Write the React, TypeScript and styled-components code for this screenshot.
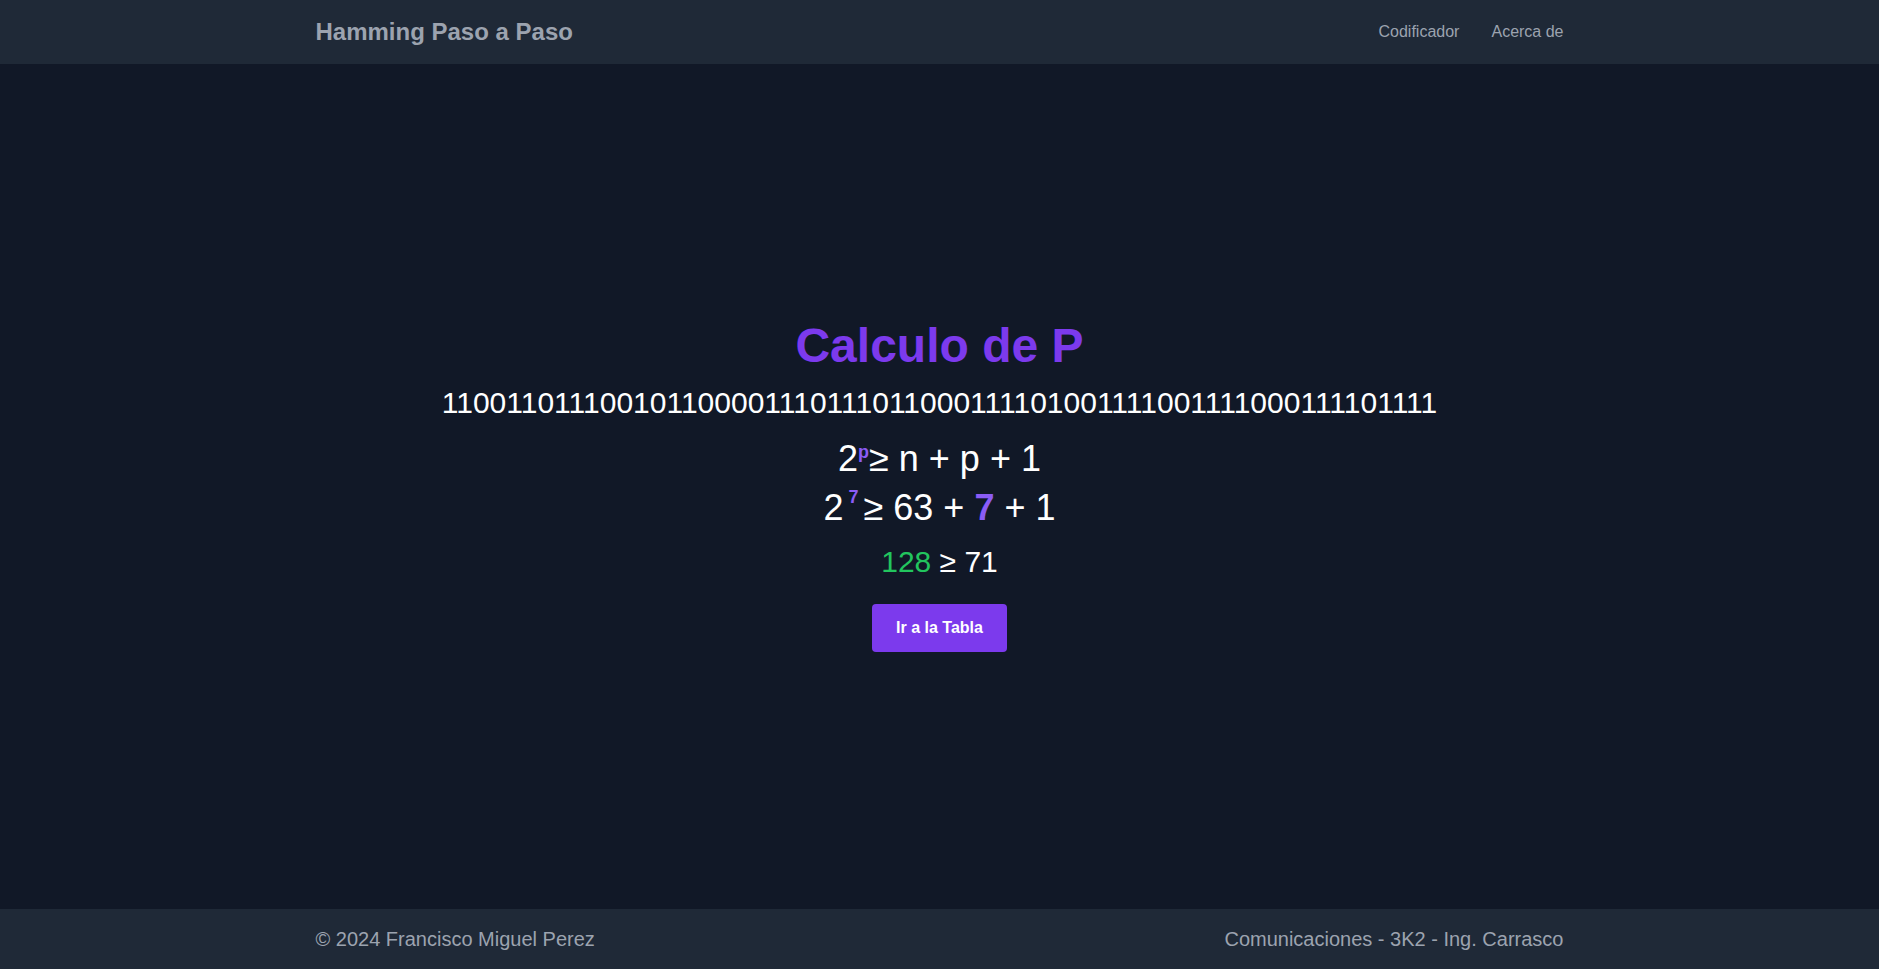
import React from 'react';
import styled, { createGlobalStyle } from 'styled-components';

const GlobalStyle = createGlobalStyle`
  html, body {
    margin: 0;
    padding: 0;
    background: #111827;
    font-family: "Liberation Sans", Arial, sans-serif;
  }
  * {
    box-sizing: border-box;
  }
`;

const Page = styled.div`
  min-height: 100vh;
  display: flex;
  flex-direction: column;
  background: #111827;
  color: #ffffff;
`;

const Bar = styled.div`
  background: #1f2937;
  flex-shrink: 0;
`;

const Container = styled.div<{ $height: number }>`
  max-width: 1280px;
  height: ${props => props.$height}px;
  margin: 0 auto;
  padding: 0 16px;
  display: flex;
  align-items: center;
  justify-content: space-between;
`;

const Brand = styled.a`
  font-size: 24px;
  line-height: 32px;
  font-weight: 700;
  color: #9ca3af;
  text-decoration: none;
`;

const Nav = styled.nav`
  display: flex;
  gap: 32px;
`;

const NavLink = styled.a`
  font-size: 16px;
  line-height: 24px;
  color: #9ca3af;
  text-decoration: none;
`;

const Main = styled.main`
  flex: 1;
  display: flex;
  flex-direction: column;
  align-items: center;
  justify-content: center;
  text-align: center;
`;

const Title = styled.h1`
  margin: 0 0 15px;
  font-size: 48px;
  line-height: 48px;
  font-weight: 700;
  color: #7c3aed;
`;

const Binary = styled.p`
  margin: 0 0 18px;
  font-size: 30px;
  line-height: 36px;
`;

const Formula = styled.p<{ $gap: number }>`
  margin: 0 0 ${props => props.$gap}px;
  font-size: 36px;
  line-height: 40px;
`;

const Sup = styled.span<{ $size: number; $raise: number }>`
  font-size: ${props => props.$size}px;
  line-height: 0;
  font-weight: 700;
  vertical-align: ${props => props.$raise}px;
  color: #8b5cf6;
  white-space: pre;
`;

const Highlight = styled.span`
  font-weight: 700;
  color: #8b5cf6;
`;

const Result = styled.p`
  margin: 0 0 24px;
  font-size: 30px;
  line-height: 36px;
`;

const Green = styled.span`
  color: #22c55e;
`;

const Button = styled.button`
  border: none;
  border-radius: 4px;
  background: #7c3aed;
  color: #ffffff;
  font-family: inherit;
  font-size: 16px;
  line-height: 24px;
  font-weight: 700;
  padding: 12px 24px;
  cursor: pointer;
  &:hover {
    background: #6d28d9;
  }
`;

const FooterText = styled.span`
  font-size: 20px;
  line-height: 28px;
  color: #9ca3af;
`;

const data = '110011011100101100001110111011000111101001111001111000111101111';

export default function App() {
  const n = data.length;
  const p = 7;
  return (
    <Page>
      <GlobalStyle />
      <Bar>
        <Container $height={64}>
          <Brand href="#">Hamming Paso a Paso</Brand>
          <Nav>
            <NavLink href="#">Codificador</NavLink>
            <NavLink href="#">Acerca de</NavLink>
          </Nav>
        </Container>
      </Bar>
      <Main>
        <Title>Calculo de P</Title>
        <Binary>{data}</Binary>
        <Formula $gap={9}>
          2<Sup $size={18} $raise={13}>p</Sup>≥ n + p + 1
        </Formula>
        <Formula $gap={16}>
          2<Sup $size={18} $raise={17}>{` ${p} `}</Sup>≥ {n} + <Highlight>{p}</Highlight> + 1
        </Formula>
        <Result>
          <Green>{2 ** p}</Green> ≥ {n + p + 1}
        </Result>
        <Button>Ir a la Tabla</Button>
      </Main>
      <Bar>
        <Container $height={60}>
          <FooterText>© 2024 Francisco Miguel Perez</FooterText>
          <FooterText>Comunicaciones - 3K2 - Ing. Carrasco</FooterText>
        </Container>
      </Bar>
    </Page>
  );
}
